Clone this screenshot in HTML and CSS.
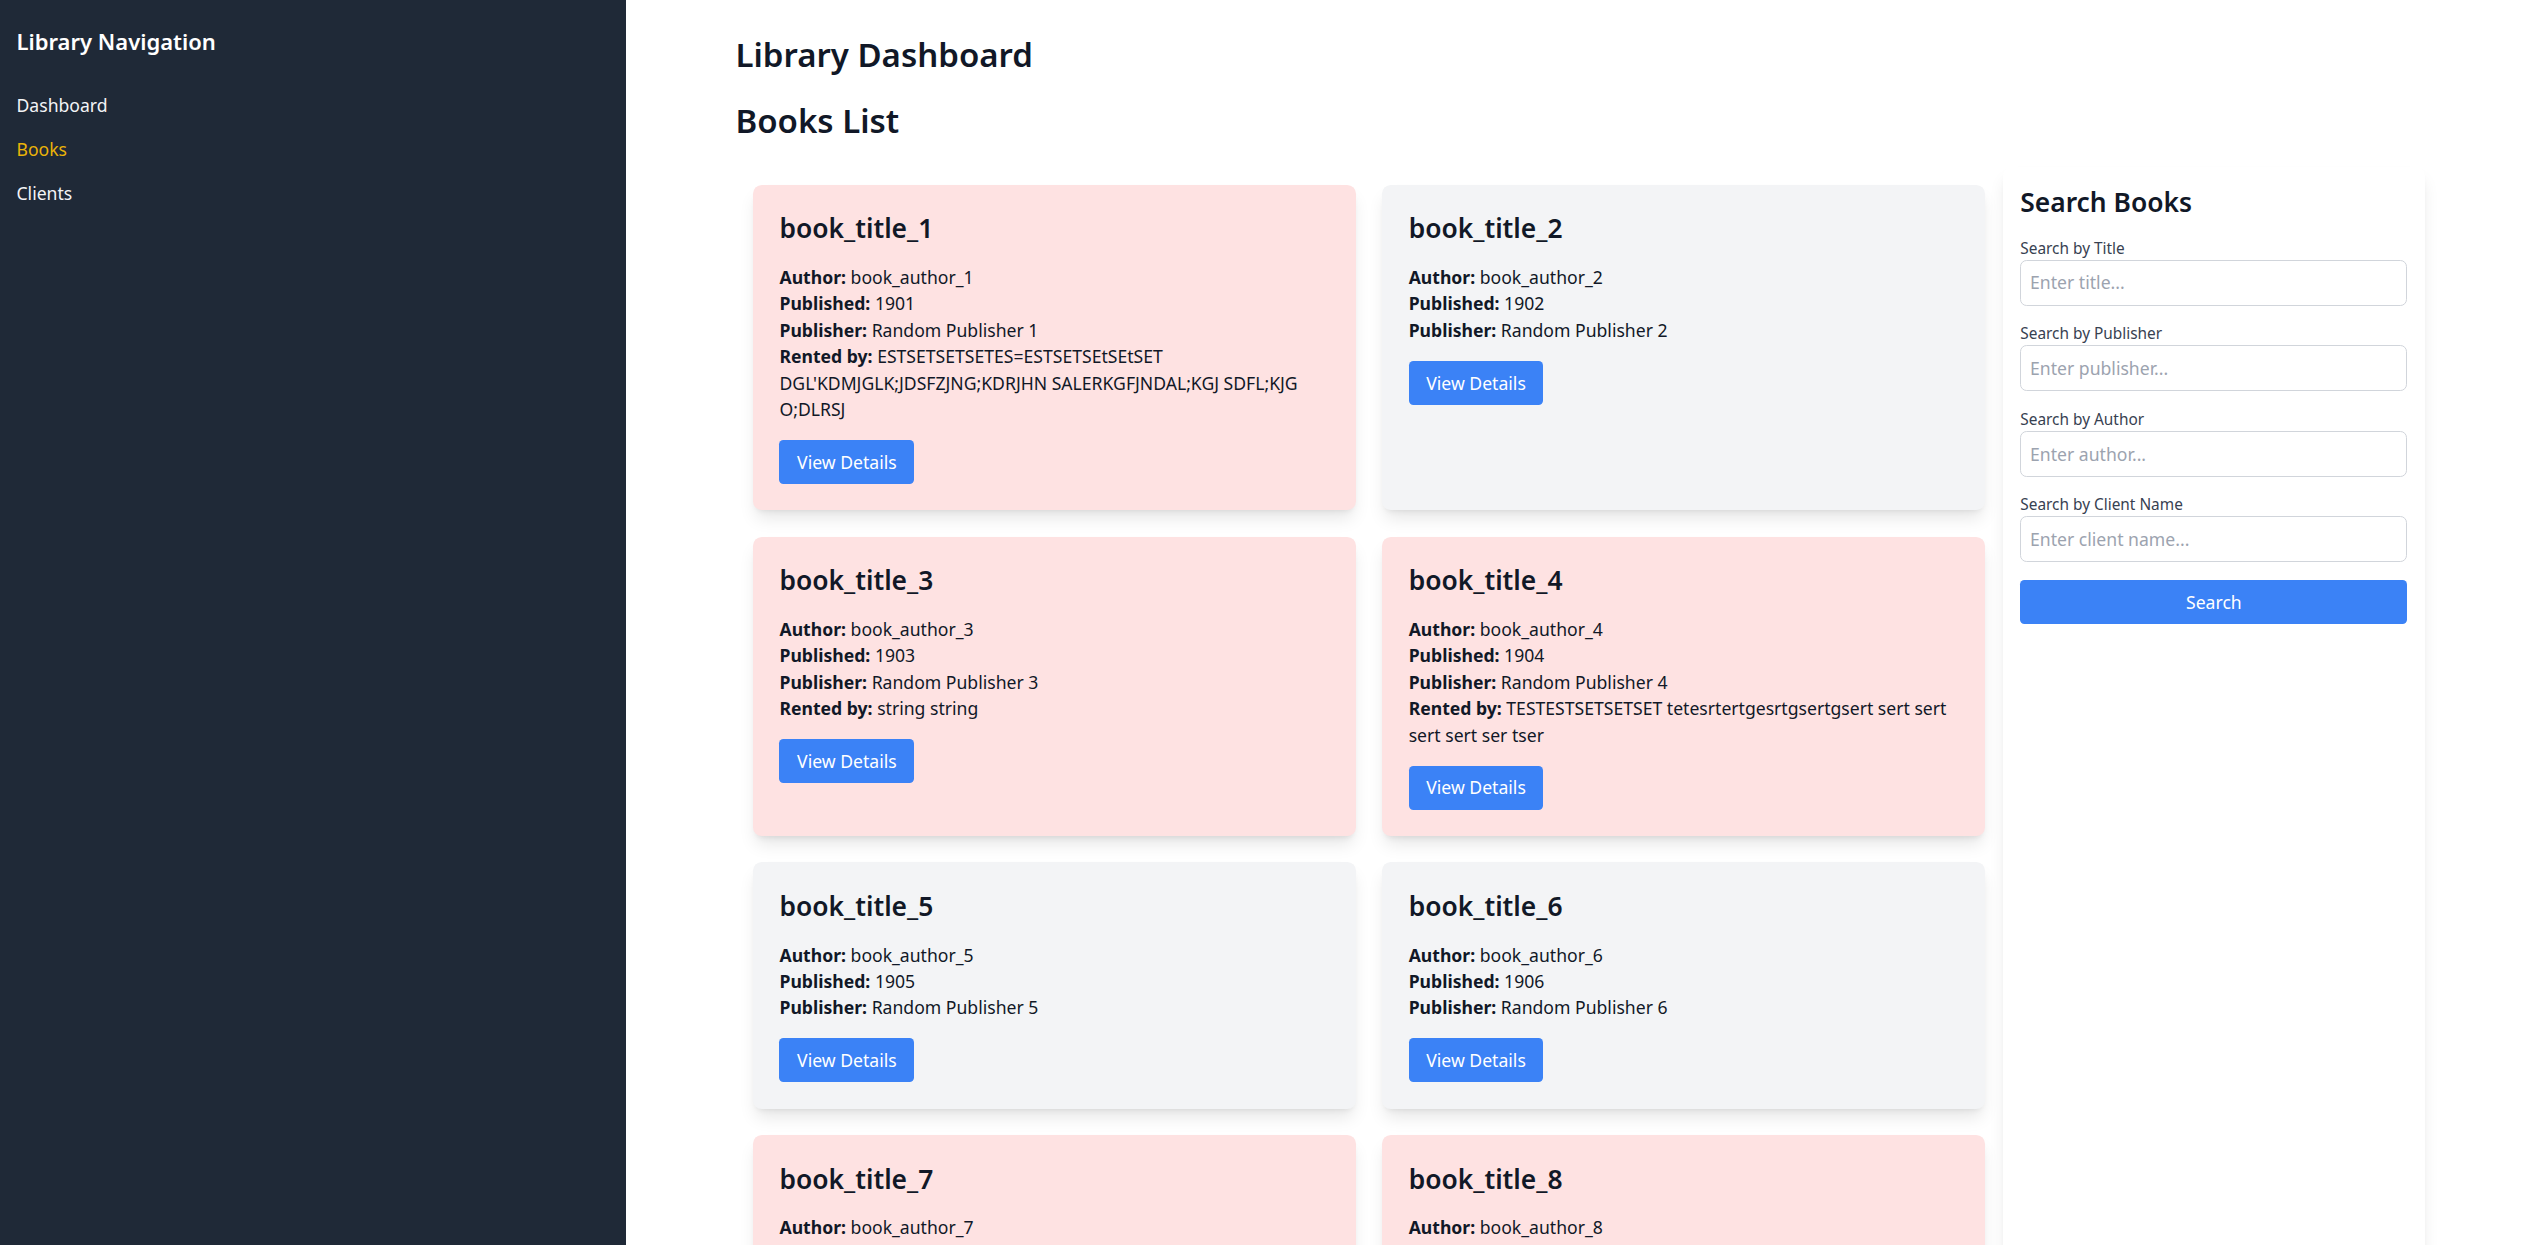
FILE: index.html
```html
<!DOCTYPE html>
<html lang="en">
<head>
<meta charset="utf-8">
<title>Library Dashboard</title>
<link rel="stylesheet" href="styles.css">
</head>
<body>
<div class="layout">
  <aside class="sidebar">
    <h2 class="sidebar-title">Library Navigation</h2>
    <nav class="nav">
      <a class="nav-link" href="#">Dashboard</a>
      <a class="nav-link active" href="#">Books</a>
      <a class="nav-link" href="#">Clients</a>
    </nav>
  </aside>
  <main class="main">
    <div class="container">
      <h1 class="page-title">Library Dashboard</h1>
      <h1 class="page-title">Books List</h1>
      <div class="content-row">
        <section class="cards-wrap">
          <div class="cards">
            <div class="card rented">
              <h3 class="card-title">book_title_1</h3>
              <p class="line"><strong>Author:</strong> book_author_1</p>
              <p class="line"><strong>Published:</strong> 1901</p>
              <p class="line"><strong>Publisher:</strong> Random Publisher 1</p>
              <p class="line"><strong>Rented by:</strong> ESTSETSETSETES=ESTSETSEtSEtSET DGL'KDMJGLK;JDSFZJNG;KDRJHN SALERKGFJNDAL;KGJ SDFL;KJG O;DLRSJ</p>
              <button class="btn">View Details</button>
            </div>
            <div class="card">
              <h3 class="card-title">book_title_2</h3>
              <p class="line"><strong>Author:</strong> book_author_2</p>
              <p class="line"><strong>Published:</strong> 1902</p>
              <p class="line"><strong>Publisher:</strong> Random Publisher 2</p>
              <button class="btn">View Details</button>
            </div>
            <div class="card rented">
              <h3 class="card-title">book_title_3</h3>
              <p class="line"><strong>Author:</strong> book_author_3</p>
              <p class="line"><strong>Published:</strong> 1903</p>
              <p class="line"><strong>Publisher:</strong> Random Publisher 3</p>
              <p class="line"><strong>Rented by:</strong> string string</p>
              <button class="btn">View Details</button>
            </div>
            <div class="card rented">
              <h3 class="card-title">book_title_4</h3>
              <p class="line"><strong>Author:</strong> book_author_4</p>
              <p class="line"><strong>Published:</strong> 1904</p>
              <p class="line"><strong>Publisher:</strong> Random Publisher 4</p>
              <p class="line"><strong>Rented by:</strong> TESTESTSETSETSET tetesrtertgesrtgsertgsert sert sert sert sert ser tser</p>
              <button class="btn">View Details</button>
            </div>
            <div class="card">
              <h3 class="card-title">book_title_5</h3>
              <p class="line"><strong>Author:</strong> book_author_5</p>
              <p class="line"><strong>Published:</strong> 1905</p>
              <p class="line"><strong>Publisher:</strong> Random Publisher 5</p>
              <button class="btn">View Details</button>
            </div>
            <div class="card">
              <h3 class="card-title">book_title_6</h3>
              <p class="line"><strong>Author:</strong> book_author_6</p>
              <p class="line"><strong>Published:</strong> 1906</p>
              <p class="line"><strong>Publisher:</strong> Random Publisher 6</p>
              <button class="btn">View Details</button>
            </div>
            <div class="card rented">
              <h3 class="card-title">book_title_7</h3>
              <p class="line"><strong>Author:</strong> book_author_7</p>
              <p class="line"><strong>Published:</strong> 1907</p>
              <p class="line"><strong>Publisher:</strong> Random Publisher 7</p>
              <p class="line"><strong>Rented by:</strong> string string</p>
              <button class="btn">View Details</button>
            </div>
            <div class="card rented">
              <h3 class="card-title">book_title_8</h3>
              <p class="line"><strong>Author:</strong> book_author_8</p>
              <p class="line"><strong>Published:</strong> 1908</p>
              <p class="line"><strong>Publisher:</strong> Random Publisher 8</p>
              <p class="line"><strong>Rented by:</strong> string string</p>
              <button class="btn">View Details</button>
            </div>
          </div>
        </section>
        <aside class="search-panel">
          <h2 class="search-title">Search Books</h2>
          <div class="field">
            <label class="label">Search by Title</label>
            <input class="input" type="text" placeholder="Enter title...">
          </div>
          <div class="field">
            <label class="label">Search by Publisher</label>
            <input class="input" type="text" placeholder="Enter publisher...">
          </div>
          <div class="field">
            <label class="label">Search by Author</label>
            <input class="input" type="text" placeholder="Enter author...">
          </div>
          <div class="field">
            <label class="label">Search by Client Name</label>
            <input class="input" type="text" placeholder="Enter client name...">
          </div>
          <button class="btn btn-block">Search</button>
        </aside>
      </div>
    </div>
  </main>
</div>
</body>
</html>
```
FILE: styles.css
```css
* { box-sizing: border-box; }
html { scrollbar-width: none; }
html::-webkit-scrollbar { display: none; }
body {
  margin: 0;
  font-family: "Noto Sans", "Open Sans", sans-serif;
  color: #111827;
  background: #ffffff;
}
.layout {
  display: flex;
  min-height: 100vh;
}
.sidebar {
  width: 626px;
  flex-shrink: 0;
  background: #1f2937;
  color: #ffffff;
  padding: 26.4px 16.5px;
}
.sidebar-title {
  margin: 0 0 35.2px;
  font-size: 22px;
  line-height: 30.8px;
  font-weight: 600;
}
.nav {
  display: flex;
  flex-direction: column;
  gap: 17.6px;
}
.nav-link {
  color: #f3f4f6;
  text-decoration: none;
  font-size: 17.6px;
  line-height: 26.4px;
}
.nav-link.active { color: #eab308; }
.main {
  flex: 1;
  padding: 35.2px 0 0 109.5px;
}
.container {
  width: 1689.6px;
}
.page-title {
  margin: 0 0 26.4px;
  font-size: 33px;
  line-height: 39.6px;
  font-weight: 600;
  color: #111827;
}
.content-row {
  display: flex;
  align-items: stretch;
}
.cards-wrap {
  width: 75%;
  padding: 17.6px;
}
.cards {
  display: grid;
  grid-template-columns: 1fr 1fr;
  gap: 26.4px;
}
.card {
  background: #f3f4f6;
  border-radius: 8.8px;
  padding: 26.4px;
  box-shadow: 0 11px 16.5px -3.3px rgba(0,0,0,0.1), 0 4.4px 6.6px -4.4px rgba(0,0,0,0.1);
}
.card.rented { background: #fee2e2; }
.card-title {
  margin: 0 0 17.6px;
  font-size: 26.4px;
  line-height: 35.2px;
  font-weight: 600;
  color: #111827;
}
.line {
  margin: 0;
  font-size: 17.6px;
  line-height: 26.4px;
  color: #111827;
}
.line strong { font-weight: 700; }
.btn {
  margin-top: 17.6px;
  background: #3b82f6;
  color: #ffffff;
  border: none;
  border-radius: 4.4px;
  padding: 8.8px 17.6px;
  font-family: inherit;
  font-size: 17.6px;
  line-height: 26.4px;
}
.search-panel {
  width: 25%;
  background: #ffffff;
  border-radius: 8.8px;
  padding: 17.6px;
  box-shadow: 0 11px 16.5px -3.3px rgba(0,0,0,0.1), 0 4.4px 6.6px -4.4px rgba(0,0,0,0.1);
}
.search-title {
  margin: 0 0 17.6px;
  font-size: 26.4px;
  line-height: 35.2px;
  font-weight: 600;
  color: #111827;
}
.field { margin-bottom: 17.6px; }
.label {
  display: block;
  font-size: 15.4px;
  line-height: 22px;
  color: #374151;
}
.input {
  display: block;
  width: 100%;
  padding: 8.8px;
  border: 1.1px solid #d1d5db;
  border-radius: 6.6px;
  font-family: inherit;
  font-size: 17.6px;
  line-height: 26.4px;
  color: #111827;
  background: #fff;
}
.input::placeholder { color: #9ca3af; }
.btn-block {
  display: block;
  width: 100%;
  margin-top: 0;
}
```
